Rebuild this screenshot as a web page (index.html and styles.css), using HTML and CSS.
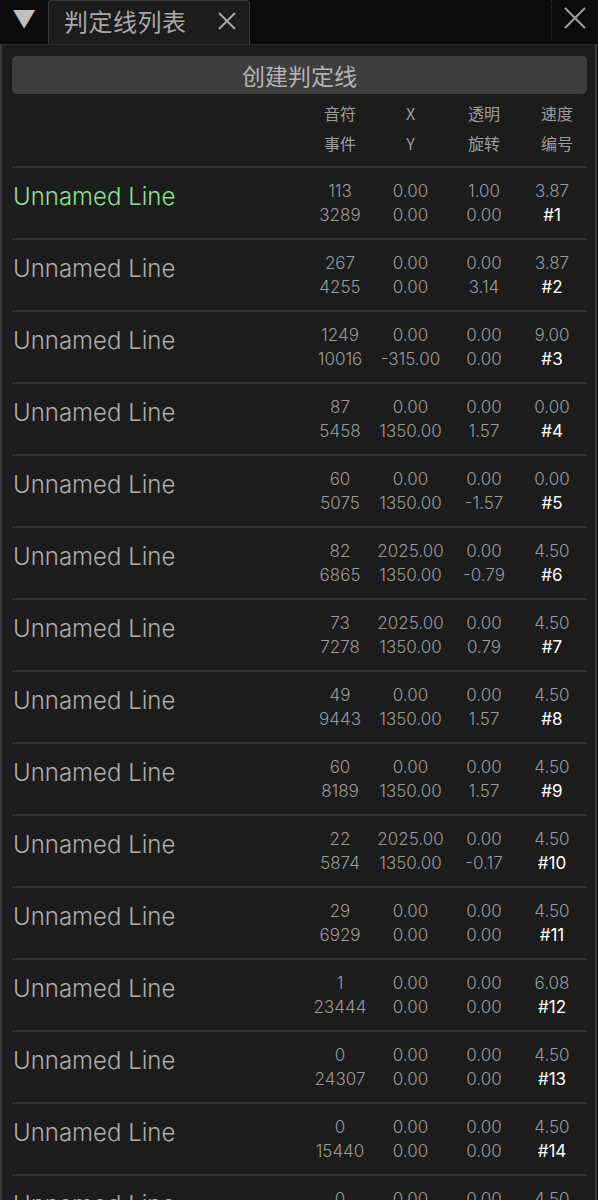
FILE: index.html
```
<!DOCTYPE html>
<html lang="zh-CN">
<head>
    <meta charset="UTF-8">
    <meta name="viewport" content="width=device-width, initial-scale=1.0">
    <title>判定线列表</title>
    <link rel="stylesheet" href="styles.css">
</head>
<body>
    <div class="tab-bar">
        <div class="collapse-btn">▼</div>
        <div class="tab">
            <span class="tab-title">判定线列表</span>
            <svg class="tab-close" width="20" height="20" viewBox="0 0 20 20"><path d="M2 2 L18 18 M18 2 L2 18" stroke="#a8a8a8" stroke-width="2" fill="none"/></svg>
        </div>
        <div class="bar-fill"></div>
        <div class="window-close">
            <svg width="22" height="22" viewBox="0 0 22 22"><path d="M1 1 L21 21 M21 1 L1 21" stroke="#a0a0a0" stroke-width="2" fill="none"/></svg>
        </div>
    </div>

    <div class="panel">
        <button class="create-btn">创建判定线</button>

        <div class="list-head">
            <div></div>
            <div class="col">音符<br>事件</div>
            <div class="col">X<br>Y</div>
            <div class="col">透明<br>旋转</div>
            <div class="col last">速度<br>编号</div>
        </div>

        <div class="line-row selected">
            <div class="name">Unnamed Line</div>
            <div class="col">113<br>3289</div>
            <div class="col">0.00<br>0.00</div>
            <div class="col">1.00<br>0.00</div>
            <div class="col">3.87<br><b>#1</b></div>
        </div>
        <div class="line-row">
            <div class="name">Unnamed Line</div>
            <div class="col">267<br>4255</div>
            <div class="col">0.00<br>0.00</div>
            <div class="col">0.00<br>3.14</div>
            <div class="col">3.87<br><b>#2</b></div>
        </div>
        <div class="line-row">
            <div class="name">Unnamed Line</div>
            <div class="col">1249<br>10016</div>
            <div class="col">0.00<br>-315.00</div>
            <div class="col">0.00<br>0.00</div>
            <div class="col">9.00<br><b>#3</b></div>
        </div>
        <div class="line-row">
            <div class="name">Unnamed Line</div>
            <div class="col">87<br>5458</div>
            <div class="col">0.00<br>1350.00</div>
            <div class="col">0.00<br>1.57</div>
            <div class="col">0.00<br><b>#4</b></div>
        </div>
        <div class="line-row">
            <div class="name">Unnamed Line</div>
            <div class="col">60<br>5075</div>
            <div class="col">0.00<br>1350.00</div>
            <div class="col">0.00<br>-1.57</div>
            <div class="col">0.00<br><b>#5</b></div>
        </div>
        <div class="line-row">
            <div class="name">Unnamed Line</div>
            <div class="col">82<br>6865</div>
            <div class="col">2025.00<br>1350.00</div>
            <div class="col">0.00<br>-0.79</div>
            <div class="col">4.50<br><b>#6</b></div>
        </div>
        <div class="line-row">
            <div class="name">Unnamed Line</div>
            <div class="col">73<br>7278</div>
            <div class="col">2025.00<br>1350.00</div>
            <div class="col">0.00<br>0.79</div>
            <div class="col">4.50<br><b>#7</b></div>
        </div>
        <div class="line-row">
            <div class="name">Unnamed Line</div>
            <div class="col">49<br>9443</div>
            <div class="col">0.00<br>1350.00</div>
            <div class="col">0.00<br>1.57</div>
            <div class="col">4.50<br><b>#8</b></div>
        </div>
        <div class="line-row">
            <div class="name">Unnamed Line</div>
            <div class="col">60<br>8189</div>
            <div class="col">0.00<br>1350.00</div>
            <div class="col">0.00<br>1.57</div>
            <div class="col">4.50<br><b>#9</b></div>
        </div>
        <div class="line-row">
            <div class="name">Unnamed Line</div>
            <div class="col">22<br>5874</div>
            <div class="col">2025.00<br>1350.00</div>
            <div class="col">0.00<br>-0.17</div>
            <div class="col">4.50<br><b>#10</b></div>
        </div>
        <div class="line-row">
            <div class="name">Unnamed Line</div>
            <div class="col">29<br>6929</div>
            <div class="col">0.00<br>0.00</div>
            <div class="col">0.00<br>0.00</div>
            <div class="col">4.50<br><b>#11</b></div>
        </div>
        <div class="line-row">
            <div class="name">Unnamed Line</div>
            <div class="col">1<br>23444</div>
            <div class="col">0.00<br>0.00</div>
            <div class="col">0.00<br>0.00</div>
            <div class="col">6.08<br><b>#12</b></div>
        </div>
        <div class="line-row">
            <div class="name">Unnamed Line</div>
            <div class="col">0<br>24307</div>
            <div class="col">0.00<br>0.00</div>
            <div class="col">0.00<br>0.00</div>
            <div class="col">4.50<br><b>#13</b></div>
        </div>
        <div class="line-row">
            <div class="name">Unnamed Line</div>
            <div class="col">0<br>15440</div>
            <div class="col">0.00<br>0.00</div>
            <div class="col">0.00<br>0.00</div>
            <div class="col">4.50<br><b>#14</b></div>
        </div>
        <div class="line-row">
            <div class="name">Unnamed Line</div>
            <div class="col">0<br>18022</div>
            <div class="col">0.00<br>0.00</div>
            <div class="col">0.00<br>0.00</div>
            <div class="col">4.50<br><b>#15</b></div>
        </div>
    </div>
</body>
</html>
```

FILE: styles.css
```
:root {
    --bar-bg: #0b0b0b;
    --panel-bg: #1c1c1c;
    --edge: #3a3a3a;
    --text: #a6a6a6;
    --num: #9a9a9a;
    --green: #8fe08f;
}

body {
    margin: 0;
    width: 598px;
    height: 1200px;
    overflow: hidden;
    background: var(--bar-bg);
    font-family: Inter, "Noto Sans CJK SC", sans-serif;
    color: var(--text);
}

.tab-bar {
    display: flex;
    height: 44px;
    background: var(--bar-bg);
}

.collapse-btn {
    width: 48px;
    font-size: 24px;
    line-height: 40px;
    padding-left: 12px;
    box-sizing: border-box;
    color: #c0c0c0;
}

.tab {
    display: flex;
    align-items: center;
    width: 202px;
    box-sizing: border-box;
    padding: 0 10px 4px 15px;
    background: var(--panel-bg);
    border: 1px solid var(--edge);
    border-bottom: none;
    border-radius: 4px 4px 0 0;
    gap: 30px;
}

.tab-title {
    font-family: "Noto Sans CJK SC", sans-serif;
    font-size: 24px;
    letter-spacing: 0.5px;
    color: #a8a8a8;
}

.bar-fill {
    flex: 1;
    border-right: 1px dotted #2e2e2e;
    margin-bottom: 4px;
}

.window-close {
    width: 46px;
    display: flex;
    justify-content: center;
    padding-top: 7px;
    box-sizing: border-box;
}

.panel {
    background: var(--panel-bg);
    border-top: 1px solid #2a2a2a;
    border-left: 2px solid var(--edge);
    border-right: 2px solid var(--edge);
    margin-right: 1px;
    padding: 11px 8px 0 10px;
    height: 1200px;
}

.create-btn {
    display: block;
    width: 100%;
    height: 38px;
    background: #3d3d3d;
    border: none;
    border-radius: 5px;
    color: #b4b4b4;
    font-family: "Noto Sans CJK SC", sans-serif;
    font-size: 23px;
    line-height: 38px;
    padding: 0;
}

.list-head,
.line-row {
    display: grid;
    grid-template-columns: 1fr 70px 71px 76px 60px;
    padding-right: 5px;
}

.list-head {
    height: 74px;
    padding-top: 4px;
    box-sizing: border-box;
    font-family: "Noto Sans CJK SC", sans-serif;
    font-size: 16px;
    line-height: 30px;
    color: #9c9c9c;
    border-bottom: 2px solid #333;
}

.list-head .col {
    text-align: center;
}

.list-head .last {
    padding-left: 10px;
}

.line-row {
    height: 72px;
    box-sizing: border-box;
    padding-top: 11px;
    border-bottom: 2px solid #333;
}

.line-row .name {
    padding-left: 1px;
    font-size: 24px;
    font-weight: 300;
    line-height: 36px;
    color: #acacac;
}

.line-row.selected .name {
    color: var(--green);
}

.line-row .col {
    text-align: center;
    font-size: 17px;
    font-weight: 300;
    line-height: 24px;
    color: var(--num);
    white-space: nowrap;
}

.line-row b {
    font-weight: normal;
    color: #fff;
}
```
